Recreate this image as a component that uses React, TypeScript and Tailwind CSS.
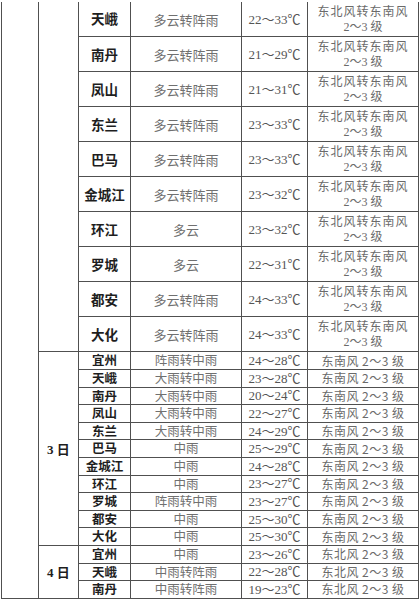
import React from "react";

type Row = { city: string; weather: string; temp: string; wind: string };

const WIND2 = "东北风转东南风";

const DAY2: Row[] = [
  { city: "天峨", weather: "多云转阵雨", temp: "22～33℃", wind: WIND2 },
  { city: "南丹", weather: "多云转阵雨", temp: "21～29℃", wind: WIND2 },
  { city: "凤山", weather: "多云转阵雨", temp: "21～31℃", wind: WIND2 },
  { city: "东兰", weather: "多云转阵雨", temp: "23～33℃", wind: WIND2 },
  { city: "巴马", weather: "多云转阵雨", temp: "23～33℃", wind: WIND2 },
  { city: "金城江", weather: "多云转阵雨", temp: "23～32℃", wind: WIND2 },
  { city: "环江", weather: "多云", temp: "23～32℃", wind: WIND2 },
  { city: "罗城", weather: "多云", temp: "22～31℃", wind: WIND2 },
  { city: "都安", weather: "多云转阵雨", temp: "24～33℃", wind: WIND2 },
  { city: "大化", weather: "多云转阵雨", temp: "24～33℃", wind: WIND2 },
];

const SE = "东南风 2～3 级";
const NE = "东北风 2～3 级";

const DAY3: Row[] = [
  { city: "宜州", weather: "阵雨转中雨", temp: "24～28℃", wind: SE },
  { city: "天峨", weather: "大雨转中雨", temp: "23～28℃", wind: SE },
  { city: "南丹", weather: "大雨转中雨", temp: "20～24℃", wind: SE },
  { city: "凤山", weather: "大雨转中雨", temp: "22～27℃", wind: SE },
  { city: "东兰", weather: "大雨转中雨", temp: "24～29℃", wind: SE },
  { city: "巴马", weather: "中雨", temp: "25～29℃", wind: SE },
  { city: "金城江", weather: "中雨", temp: "24～28℃", wind: SE },
  { city: "环江", weather: "中雨", temp: "23～27℃", wind: SE },
  { city: "罗城", weather: "阵雨转中雨", temp: "23～27℃", wind: SE },
  { city: "都安", weather: "中雨", temp: "25～30℃", wind: SE },
  { city: "大化", weather: "中雨", temp: "25～30℃", wind: SE },
];

const DAY4: Row[] = [
  { city: "宜州", weather: "中雨", temp: "23～26℃", wind: NE },
  { city: "天峨", weather: "中雨转阵雨", temp: "22～28℃", wind: NE },
  { city: "南丹", weather: "中雨转阵雨", temp: "19～23℃", wind: NE },
];

const cell = "border-r border-b border-[#505050] text-center align-middle p-0 leading-none";
const cjk = "font-['Noto_Sans_CJK_SC',sans-serif]";
const temp = "font-['Liberation_Serif','Noto_Sans_CJK_SC',serif]";

function Cells({ r, tall }: { r: Row; tall: boolean }) {
  return (
    <>
      <td className={`${cell} ${cjk} font-bold text-[#1e1e1e] ${tall ? "text-[13.5px]" : "text-[12.5px]"}`}>
        {r.city}
      </td>
      <td className={`${cell} ${cjk} text-[#707070] ${tall ? "text-[13px]" : "text-[12.5px]"}`}>
        {r.weather}
      </td>
      <td className={`${cell} ${temp} text-[#555] text-[13px]`}>{r.temp}</td>
      <td className={`${cell} ${cjk} text-[#6a6a6a] text-[12px]`}>
        {tall ? (
          <div className="flex flex-col items-center leading-[17px]">
            <span className="tracking-[1px]">{r.wind}</span>
            <span className={temp}>2～3 级</span>
          </div>
        ) : (
          <span className="tracking-[0.5px]">{r.wind}</span>
        )}
      </td>
    </>
  );
}

export default function App() {
  const total = DAY2.length + DAY3.length + DAY4.length;
  return (
    <div className="w-[420px] h-[600px] bg-white overflow-hidden pt-[2px] pl-[1px]">
      <table className="table-fixed border-collapse w-[417px]">
        <colgroup>
          <col className="w-[37px]" />
          <col className="w-[40px]" />
          <col className="w-[52px]" />
          <col className="w-[111px]" />
          <col className="w-[66px]" />
          <col className="w-[111px]" />
        </colgroup>
        <tbody>
          {DAY2.map((r, i) => (
            <tr key={"d2" + i} className="h-[34.9px]">
              {i === 0 && <td rowSpan={total} className={`${cell} border-l`} />}
              {i === 0 && <td rowSpan={DAY2.length} className={cell} />}
              <Cells r={r} tall />
            </tr>
          ))}
          {DAY3.map((r, i) => (
            <tr key={"d3" + i} className="h-[17.6px]">
              {i === 0 && (
                <td rowSpan={DAY3.length} className={`${cell} ${temp} font-bold text-[13px] text-[#1e1e1e]`}>
                  3 <span className={cjk}>日</span>
                </td>
              )}
              <Cells r={r} tall={false} />
            </tr>
          ))}
          {DAY4.map((r, i) => (
            <tr key={"d4" + i} className="h-[17.6px]">
              {i === 0 && (
                <td rowSpan={DAY4.length} className={`${cell} ${temp} font-bold text-[13px] text-[#1e1e1e]`}>
                  4 <span className={cjk}>日</span>
                </td>
              )}
              <Cells r={r} tall={false} />
            </tr>
          ))}
        </tbody>
      </table>
    </div>
  );
}
